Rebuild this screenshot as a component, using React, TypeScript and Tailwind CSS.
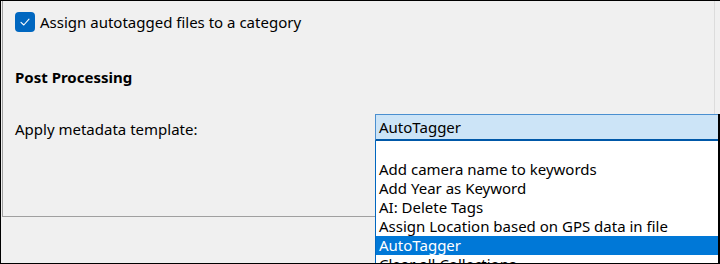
const items = [
  '',
  'Add camera name to keywords',
  'Add Year as Keyword',
  'AI: Delete Tags',
  'Assign Location based on GPS data in file',
  'AutoTagger',
  'Clear all Collections',
];

function CheckBox() {
  return (
    <span className="w-[20px] h-[20px] rounded-[4px] bg-[#0067c0] flex items-center justify-center">
      <svg width="12" height="12" viewBox="0 0 12 12" fill="none">
        <path d="M2 6.3 L4.8 9 L10 3.2" stroke="white" strokeWidth="1.1" strokeLinecap="round" strokeLinejoin="round" />
      </svg>
    </span>
  );
}

function ComboBox({ value }: { value: string }) {
  return (
    <div className="relative shrink-0 w-[345px] border-r-2 border-black">
      <div className="h-[27px] bg-[#cce4f7] border-t border-l border-[#4a8fd0] border-b-2 border-b-[#0058a8] pl-[3px] flex items-center">
        {value}
      </div>
      <div className="absolute left-0 top-full w-[345px] h-[140px] bg-white border-l border-l-[#0067c0] border-r-2 border-r-black overflow-hidden">
        {items.map((item, i) => (
          <div
            key={i}
            className={
              'h-[19px] pl-[3px] leading-[19px] whitespace-nowrap ' +
              (item === value ? 'bg-[#0078d7] text-white' : 'text-black')
            }
          >
            {item}
          </div>
        ))}
      </div>
    </div>
  );
}

export default function App() {
  return (
    <div
      className="w-[720px] h-[264px] overflow-hidden bg-[#f0f0f0] border-t border-l border-b border-black text-[15px] text-black"
      style={{ fontFamily: "'Noto Sans', 'Segoe UI', sans-serif" }}
    >
      <div className="ml-[1px] w-[713px] h-[216px] border-l border-b border-r border-l-[#a0a0a0] border-b-[#a0a0a0] border-r-[#dcdcdc] pl-[12px] pt-[11px]">
        <label className="flex items-center gap-[5px] h-[20px]">
          <CheckBox />
          <span>Assign autotagged files to a category</span>
        </label>
        <div className="mt-[35px] font-bold h-[20px] leading-[20px]">Post Processing</div>
        <div className="mt-[27px] flex items-start">
          <div className="w-[360px] shrink-0 pt-[4px]">Apply metadata template:</div>
          <ComboBox value="AutoTagger" />
        </div>
      </div>
    </div>
  );
}
